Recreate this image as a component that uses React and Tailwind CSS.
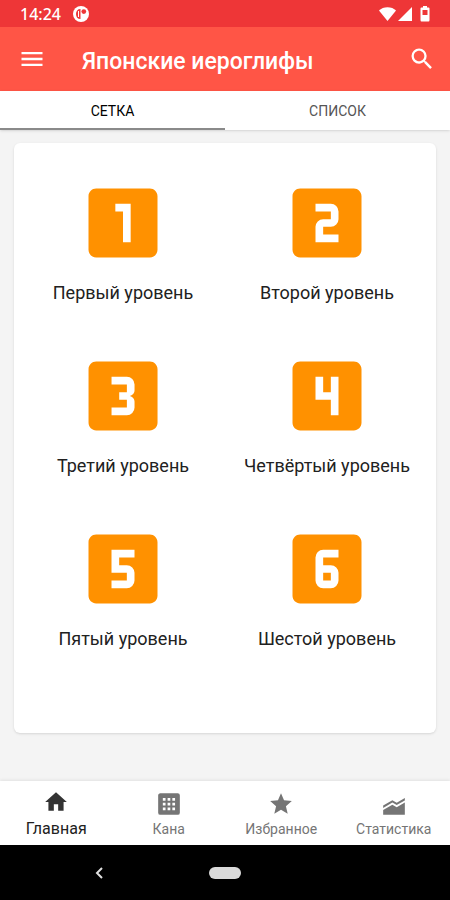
import React, { useState } from 'react'
import {
  MdHome,
  MdLooks3,
  MdLooks4,
  MdLooks5,
  MdLooks6,
  MdLooksOne,
  MdLooksTwo,
  MdMenu,
  MdSearch,
  MdStar,
} from 'react-icons/md'
import { clsx } from 'clsx'

const KanaIcon = ({ className }) => (
  <svg viewBox="0 0 24 24" fill="currentColor" className={className} aria-hidden="true">
    <path
      fillRule="evenodd"
      d="M4 2h16a2 2 0 0 1 2 2v16a2 2 0 0 1-2 2H4a2 2 0 0 1-2-2V4c0-1.100.9-2 2-2zM6.300 6.500v2.500h2.500V6.500zm4.400 0v2.500h2.500V6.500zm4.400 0v2.500h2.500V6.500zM6.300 10.800v2.500h2.500v-2.500zm4.400 0v2.500h2.500v-2.500zm4.400 0v2.500h2.500v-2.500zM6.300 15.200v2.500h2.500v-2.500zm4.400 0v2.500h2.500v-2.500zm4.400 0v2.500h2.500v-2.500z"
    />
  </svg>
)

const StatsIcon = ({ className }) => (
  <svg viewBox="0 0 24 24" fill="currentColor" className={className} aria-hidden="true">
    <path d="M2 22v-4.500l8.500-4.800 4 2.300L22 10.700V22z" />
    <path d="M2 15.600v-2.200l8.500-4.900 4 2.300L22 6.500v2.200l-7.500 4.300-4-2.300z" />
  </svg>
)

const levels = [
  { icon: MdLooksOne, label: 'Первый уровень' },
  { icon: MdLooksTwo, label: 'Второй уровень' },
  { icon: MdLooks3,   label: 'Третий уровень' },
  { icon: MdLooks4,   label: 'Четвёртый уровень' },
  { icon: MdLooks5,   label: 'Пятый уровень' },
  { icon: MdLooks6,   label: 'Шестой уровень' },
]

const tabs = ['Сетка', 'Список']

const navItems = [
  { icon: MdHome,    label: 'Главная' },
  { icon: KanaIcon,  label: 'Кана' },
  { icon: MdStar,    label: 'Избранное' },
  { icon: StatsIcon, label: 'Статистика' },
]

function StatusBar() {
  return (
    <div className="h-[27px] px-5 bg-[#ee3637] text-white flex items-center">
      <span className="font-['Noto_Sans',sans-serif] text-base leading-6 font-medium">14:24</span>
      <svg viewBox="0 0 16 16" className="w-4 h-4 ml-3" aria-hidden="true">
        <circle cx="8" cy="8" r="8" fill="#fff" />
        <path d="M7.500 3v10C4.500 13 3 11 3 8s1.500-5 4.500-5z" fill="#ee3637" />
        <path d="M5.500 5v6" stroke="#fff" strokeWidth="1" />
        <circle cx="10.800" cy="5.600" r="2.400" fill="#ee3637" />
      </svg>
      <div className="flex-1" />
      <svg viewBox="0 0 52 16" className="w-[52px] h-4" fill="#fff" aria-hidden="true">
        <path d="M1 4.500C5 0 14 0 18 4.500L9.500 15z" />
        <path d="M34 1v14H20z" />
        <path
          fillRule="evenodd"
          d="M45 0h4v1.500h1.500q1 0 1 1V14q0 1.500-1 1.500h-7q-1 0-1-1.500V2.500q0-1 1-1H45zM44.500 4v5h5V4z"
        />
      </svg>
    </div>
  )
}

function AppBar() {
  return (
    <header className="h-16 px-5 bg-[#ff5546] text-white flex items-center">
      <button aria-label="Меню">
        <MdMenu className="w-7 h-7 -ml-0.5" />
      </button>
      <h1 className="flex-1 ml-9 pt-1.5 text-[23px] font-medium">Японские иероглифы</h1>
      <button aria-label="Поиск" className="-mr-1.5">
        <MdSearch className="w-7 h-7" />
      </button>
    </header>
  )
}

function LevelCard() {
  return (
    <section className="flex-1 bg-white rounded-md shadow-sm px-[7px] pt-[34px]">
      <div className="grid grid-cols-2 gap-y-[45px]">
        {levels.map(({ icon: Icon, label }) => (
          <button key={label} className="flex flex-col items-center gap-3">
            <Icon className="w-[92px] h-[92px] text-[#ff9100]" />
            <span className="text-lg leading-6 whitespace-nowrap text-[#212121]">{label}</span>
          </button>
        ))}
      </div>
    </section>
  )
}

export default function App() {
  const [tab, setTab] = useState('Сетка')
  const [page, setPage] = useState('Главная')

  return (
    <div className="min-h-screen flex flex-col bg-[#f4f4f4] font-[Roboto,sans-serif]">
      <StatusBar />
      <AppBar />

      <div className="grid grid-cols-2 bg-white shadow-sm">
        {tabs.map((name) => (
          <button
            key={name}
            onClick={() => setTab(name)}
            className={clsx(
              'h-[39px] pt-0.5 border-b-2 text-sm uppercase',
              tab === name ? 'border-[#8a8a8a] text-black' : 'border-transparent text-[#555]'
            )}
          >
            {name}
          </button>
        ))}
      </div>

      <main className="flex-1 flex flex-col px-3.5 pt-[13px] pb-12">
        <LevelCard />
      </main>

      <nav className="h-16 grid grid-cols-4 bg-white shadow-[0_-1px_3px_rgba(0,0,0,0.08)]">
        {navItems.map(({ icon: Icon, label }) => (
          <button
            key={label}
            onClick={() => setPage(label)}
            className={clsx(
              'flex flex-col items-center leading-6',
              page === label ? 'pt-2 gap-0.5 text-base text-[#333]' : 'pt-2.5 text-sm text-[#757575]'
            )}
          >
            <Icon className="w-[26px] h-[26px]" />
            <span className={clsx(page === label && 'text-[#212121]')}>{label}</span>
          </button>
        ))}
      </nav>

      <div className="h-[55px] grid grid-cols-[1fr_auto_1fr] items-center bg-black">
        <button aria-label="Назад" className="justify-self-center pr-3">
          <svg viewBox="0 0 8 12" className="w-2 h-3" fill="none" stroke="#e0e0e0" strokeWidth="2" aria-hidden="true">
            <path d="M7 1L2 6l5 5" />
          </svg>
        </button>
        <button aria-label="Домой" className="w-8 h-3 rounded-full bg-[#dadada]" />
      </div>
    </div>
  )
}
